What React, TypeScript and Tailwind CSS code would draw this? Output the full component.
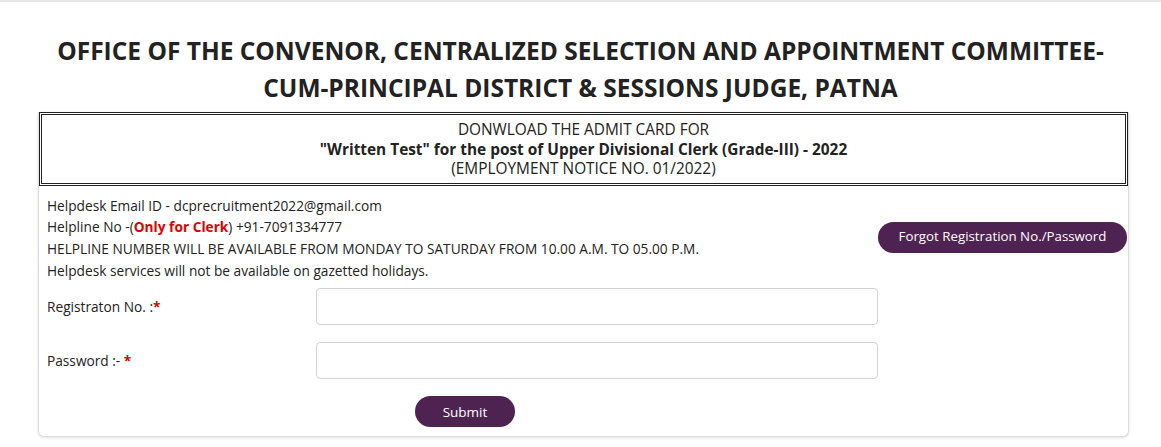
export default function App() {
  return (
    <div className="min-h-[447px] bg-white border-t-2 border-[#e5e5e5] font-['Open_Sans',sans-serif] text-[#212529]">
      <h1 className="pt-[30px] pb-[6px] text-center text-[24.5px] font-bold leading-[37px] text-[#222]">
        OFFICE OF THE CONVENOR, CENTRALIZED SELECTION AND APPOINTMENT COMMITTEE-
        <br />
        CUM-PRINCIPAL DISTRICT &amp; SESSIONS JUDGE, PATNA
      </h1>

      <div className="mx-[38px] w-[1091px] rounded-b-md border border-[#dcdcdc] border-t-0 shadow-[0_1px_3px_rgba(0,0,0,0.12)]">
        <div className="border-[3px] border-double border-[#222] pt-[5px] pb-[4px] text-center text-[15.4px] leading-[19.5px] text-[#222]">
          <p>DONWLOAD THE ADMIT CARD FOR</p>
          <p className="font-bold">&quot;Written Test&quot; for the post of Upper Divisional Clerk (Grade-III) - 2022</p>
          <p>(EMPLOYMENT NOTICE NO. 01/2022)</p>
        </div>

        <div className="flex pl-[8px] pr-[6px] pt-[9px] pb-[9px]">
          <div className="w-[831px]">
            <div className="text-[13.7px] leading-[21.7px] text-[#222]">
              <p>Helpdesk Email ID - dcprecruitment2022@gmail.com</p>
              <p>
                Helpline No -(<span className="font-bold text-[#e00000]">Only for Clerk</span>) +91-7091334777
              </p>
              <p>HELPLINE NUMBER WILL BE AVAILABLE FROM MONDAY TO SATURDAY FROM 10.00 A.M. TO 05.00 P.M.</p>
              <p>Helpdesk services will not be available on gazetted holidays.</p>
            </div>

            <div className="mt-[7px] flex items-center">
              <label className="w-[269px] text-[13.7px] text-[#222]">
                Registraton No. :<span className="font-bold text-[#e00000]">*</span>
              </label>
              <input className="h-[37px] w-[563px] rounded-[4px] border border-[#d3d3d3] bg-white outline-none" />
            </div>

            <div className="mt-[17px] flex items-center">
              <label className="w-[269px] text-[13.7px] text-[#222]">
                Password :- <span className="font-bold text-[#e00000]">*</span>
              </label>
              <input
                type="password"
                className="h-[37px] w-[563px] rounded-[4px] border border-[#d3d3d3] bg-white outline-none"
              />
            </div>

            <div className="mt-[17px] pl-[368px]">
              <button className="h-[31px] w-[100px] rounded-full bg-[#4e2352] text-[13.5px] text-white">
                Submit
              </button>
            </div>
          </div>

          <div className="flex flex-1 justify-end pt-[27px]">
            <button className="h-[31px] w-[249px] rounded-full bg-[#4e2352] text-[13.3px] text-white">
              Forgot Registration No./Password
            </button>
          </div>
        </div>
      </div>
    </div>
  );
}
